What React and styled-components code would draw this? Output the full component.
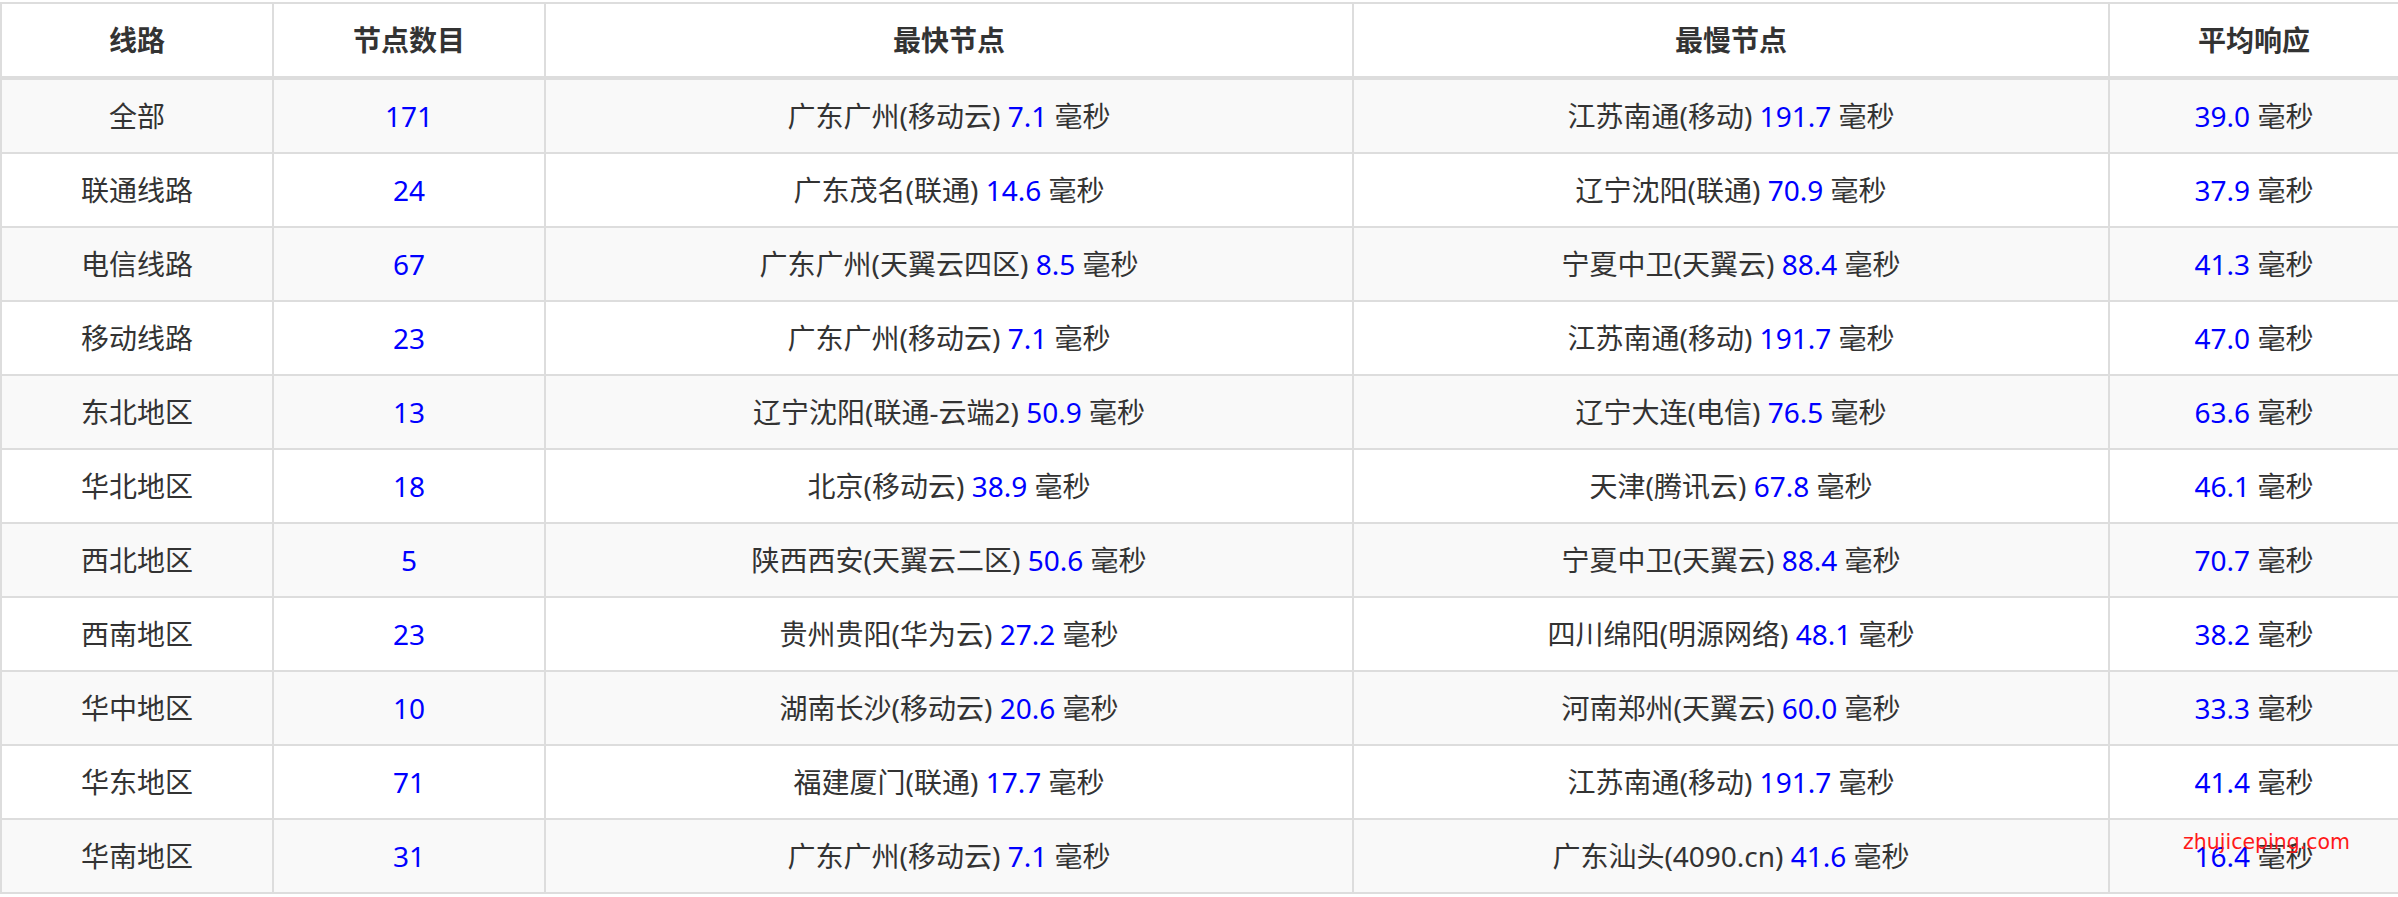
import React from 'react';
import styled, { createGlobalStyle } from 'styled-components';

const GlobalStyle = createGlobalStyle`
  html, body {
    margin: 0;
    padding: 0;
    background: #ffffff;
    overflow: hidden;
  }
  body {
    font-family: "Noto Sans", "Noto Sans CJK SC", sans-serif;
  }
`;

const PageWrapper = styled.div`
  position: relative;
  width: 2398px;
  height: 897px;
  overflow: hidden;
  padding-top: 2px;
  box-sizing: border-box;
`;

const Table = styled.div`
  display: grid;
  grid-template-columns: 272px 272px 808px 756px 290px;
  grid-auto-rows: 74px;
  grid-template-rows: 76px;
  width: 2400px;
  border-left: 2px solid #dddddd;
  border-top: 2px solid #dddddd;
`;

const HeadCell = styled.div`
  display: flex;
  align-items: center;
  justify-content: center;
  box-sizing: border-box;
  border-right: 2px solid #dddddd;
  border-bottom: 4px solid #dddddd;
  background: #ffffff;
  font-size: 28px;
  font-weight: 700;
  color: #333333;
  line-height: 1;
`;

const Cell = styled.div`
  display: flex;
  align-items: center;
  justify-content: center;
  box-sizing: border-box;
  border-right: 2px solid #dddddd;
  border-bottom: 2px solid #dddddd;
  background: ${(p) => (p.$striped ? '#f9f9f9' : '#ffffff')};
  font-size: 28px;
  color: #333333;
  line-height: 1;
  white-space: pre;
`;

const Num = styled.span`
  color: #0000ff;
`;

// site watermark stamped over the last row
const Watermark = styled.div`
  position: absolute;
  left: 2183px;
  top: 832px;
  font-family: "DejaVu Sans", sans-serif;
  font-size: 20.5px;
  line-height: 1;
  color: #ff1a1a;
  white-space: nowrap;
  pointer-events: none;
`;

const HEADERS = ['线路', '节点数目', '最快节点', '最慢节点', '平均响应'];

const ROWS = [
  ['全部', '171', '广东广州(移动云)', '7.1', '江苏南通(移动)', '191.7', '39.0'],
  ['联通线路', '24', '广东茂名(联通)', '14.6', '辽宁沈阳(联通)', '70.9', '37.9'],
  ['电信线路', '67', '广东广州(天翼云四区)', '8.5', '宁夏中卫(天翼云)', '88.4', '41.3'],
  ['移动线路', '23', '广东广州(移动云)', '7.1', '江苏南通(移动)', '191.7', '47.0'],
  ['东北地区', '13', '辽宁沈阳(联通-云端2)', '50.9', '辽宁大连(电信)', '76.5', '63.6'],
  ['华北地区', '18', '北京(移动云)', '38.9', '天津(腾讯云)', '67.8', '46.1'],
  ['西北地区', '5', '陕西西安(天翼云二区)', '50.6', '宁夏中卫(天翼云)', '88.4', '70.7'],
  ['西南地区', '23', '贵州贵阳(华为云)', '27.2', '四川绵阳(明源网络)', '48.1', '38.2'],
  ['华中地区', '10', '湖南长沙(移动云)', '20.6', '河南郑州(天翼云)', '60.0', '33.3'],
  ['华东地区', '71', '福建厦门(联通)', '17.7', '江苏南通(移动)', '191.7', '41.4'],
  ['华南地区', '31', '广东广州(移动云)', '7.1', '广东汕头(4090.cn)', '41.6', '16.4'],
];

export default function App() {
  return (
    <>
      <GlobalStyle />
      <PageWrapper>
        <Table>
          {HEADERS.map((h) => (
            <HeadCell key={h}>{h}</HeadCell>
          ))}
          {ROWS.map((row, i) => {
            const striped = i % 2 === 0;
            const [name, count, fastName, fastMs, slowName, slowMs, avg] = row;
            return (
              <React.Fragment key={name}>
                <Cell $striped={striped}>{name}</Cell>
                <Cell $striped={striped}>
                  <Num>{count}</Num>
                </Cell>
                <Cell $striped={striped}>
                  {fastName} <Num>{fastMs}</Num> 毫秒
                </Cell>
                <Cell $striped={striped}>
                  {slowName} <Num>{slowMs}</Num> 毫秒
                </Cell>
                <Cell $striped={striped}>
                  <Num>{avg}</Num> 毫秒
                </Cell>
              </React.Fragment>
            );
          })}
        </Table>
        <Watermark>zhujiceping.com</Watermark>
      </PageWrapper>
    </>
  );
}
